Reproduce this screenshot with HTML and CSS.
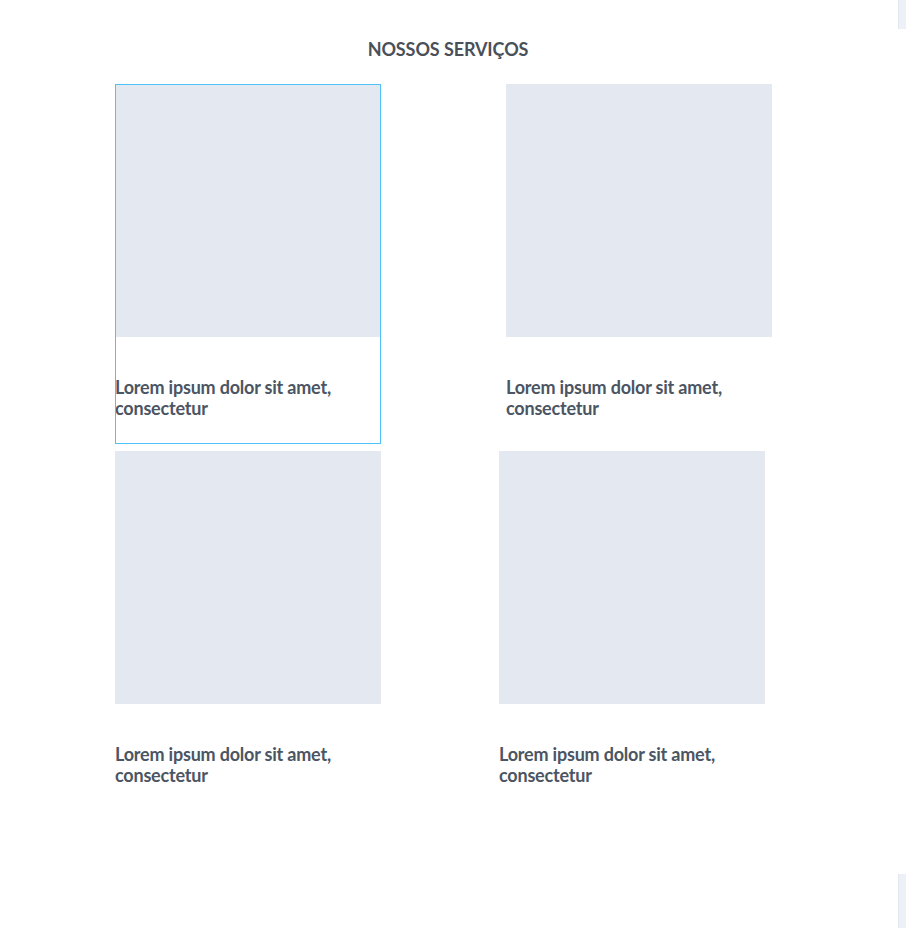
FILE: index.html
```html
<!DOCTYPE html>
<html lang="pt">
<head>
  <meta charset="UTF-8">
  <title>Nossos Serviços</title>
  <link rel="stylesheet" href="styles.css">
</head>
<body>
  <section class="services">
    <h2 class="services-title">NOSSOS SERVIÇOS</h2>

    <div class="services-row">
      <div class="card card-active">
        <div class="card-image"></div>
        <p class="card-text">Lorem ipsum dolor sit amet, consectetur</p>
      </div>
      <div class="card">
        <div class="card-image"></div>
        <p class="card-text">Lorem ipsum dolor sit amet, consectetur</p>
      </div>
    </div>

    <div class="services-row services-row-tight">
      <div class="card">
        <div class="card-image"></div>
        <p class="card-text">Lorem ipsum dolor sit amet, consectetur</p>
      </div>
      <div class="card">
        <div class="card-image"></div>
        <p class="card-text">Lorem ipsum dolor sit amet, consectetur</p>
      </div>
    </div>
  </section>

  <div class="edge edge-top"></div>
  <div class="edge edge-bottom"></div>
</body>
</html>
```

FILE: styles.css
```css
body {
  margin: 0;
  background-color: #ffffff;
  font-family: Lato, "Open Sans", sans-serif;
  color: #4b5563;
}

.services {
  padding: 38px 0 0 115px;
}

.services-title {
  margin: 0 0 24px 0;
  width: 666px;
  text-align: center;
  font-size: 18px;
  line-height: 22px;
  font-weight: 700;
  letter-spacing: -0.1px;
  color: #4a5059;
}

.services-row {
  display: flex;
  gap: 125px;
  margin-bottom: 7px;
}

.services-row-tight {
  gap: 118px;
}

.card {
  width: 266px;
  padding-bottom: 25px;
}

.card-active {
  outline: 1px solid #4fc3f7;
  outline-offset: -1px;
}

.card-image {
  height: 253px;
  background-color: #e4e8f1;
}

.card-text {
  margin: 40px 0 0 0;
  width: 230px;
  font-size: 18px;
  line-height: 21px;
  font-weight: 700;
  letter-spacing: -0.2px;
  color: #4b5563;
}

.edge {
  position: absolute;
  right: 0;
  width: 7px;
  background-color: #eef0f7;
  border-left: 1px solid #e3e6ee;
}

.edge-top {
  top: 0;
  height: 29px;
}

.edge-bottom {
  top: 874px;
  height: 54px;
}
```
